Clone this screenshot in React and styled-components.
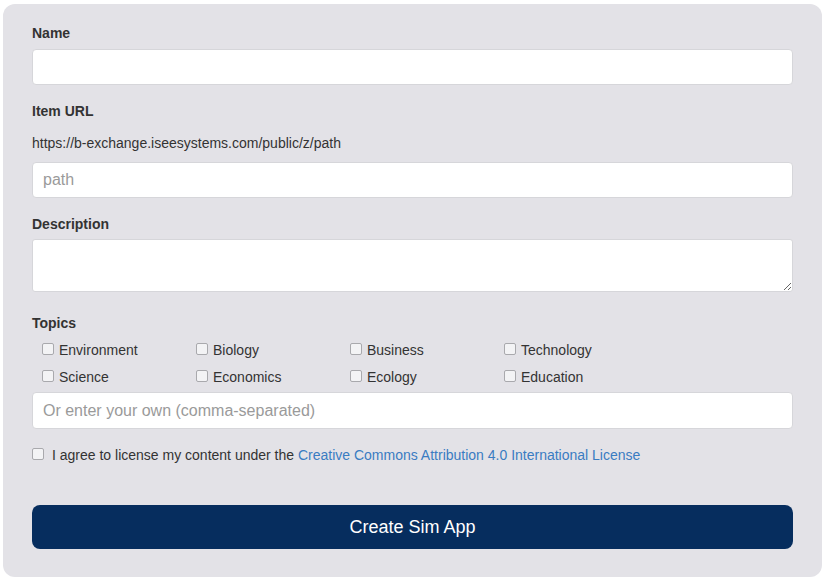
import React from 'react';
import styled, { createGlobalStyle } from 'styled-components';

const GlobalStyle = createGlobalStyle`
  html, body {
    margin: 0;
    padding: 0;
    background: #ffffff;
    font-family: "Liberation Sans", Arial, sans-serif;
    color: #333333;
  }
  * {
    box-sizing: border-box;
  }
`;

const Page = styled.div`
  padding: 4px 4px 6px 3px;
`;

const Card = styled.form`
  width: 819px;
  background: #e3e2e7;
  border-radius: 12px;
  padding: 20px 29px 28px 29px;
  display: flex;
  flex-direction: column;
`;

const Label = styled.label`
  display: block;
  font-size: 14px;
  line-height: 18px;
  font-weight: 700;
  color: #333333;
  margin-top: ${props => props.$top || 0}px;
  margin-bottom: ${props => props.$bottom || 0}px;
`;

const Field = styled.input`
  display: block;
  width: 100%;
  height: ${props => props.$height || 36}px;
  margin-top: ${props => props.$top || 0}px;
  padding: 0 10px;
  border: 1px solid #d6d6da;
  border-radius: 4px;
  background: #ffffff;
  font-family: inherit;
  font-size: 16px;
  color: #333333;
  outline: none;

  &::placeholder {
    color: #9a9a9a;
  }
`;

const TextArea = styled.textarea`
  display: block;
  width: 100%;
  height: 53px;
  padding: 6px 10px;
  border: 1px solid #d6d6da;
  border-radius: 3px;
  background: #ffffff;
  font-family: inherit;
  font-size: 16px;
  resize: vertical;
  outline: none;
`;

const UrlPrefix = styled.div`
  font-size: 14px;
  line-height: 20px;
  color: #333333;
  margin-top: 13px;
  margin-bottom: 9px;
`;

const TopicGrid = styled.div`
  display: grid;
  grid-template-columns: repeat(4, 154px);
  grid-auto-rows: 27px;
  padding-left: 10px;
  margin-top: 4px;
`;

const TopicItem = styled.label`
  display: flex;
  align-items: center;
  gap: 5px;
  font-size: 14px;
  color: #333333;
`;

const Check = styled.input.attrs({ type: 'checkbox' })`
  appearance: none;
  width: 12px;
  height: 12px;
  margin: 0 0 2px 0;
  border: 1px solid #a9a9ad;
  border-radius: 2px;
  background: #f3f3f5;
  flex-shrink: 0;
`;

const AgreeRow = styled.label`
  display: flex;
  align-items: center;
  gap: 8px;
  font-size: 14px;
  line-height: 20px;
  color: #333333;
  margin-top: 16px;
`;

const Link = styled.a`
  color: #3a7cc2;
  text-decoration: none;
`;

const SubmitButton = styled.button`
  margin-top: 40px;
  width: 100%;
  height: 44px;
  border: none;
  border-radius: 8px;
  background: #062d5e;
  color: #ffffff;
  font-family: inherit;
  font-size: 18px;
  cursor: pointer;
`;

const topics = [
  'Environment', 'Biology', 'Business', 'Technology',
  'Science', 'Economics', 'Ecology', 'Education',
];

export default function App() {
  return (
    <>
      <GlobalStyle />
      <Page>
        <Card onSubmit={e => e.preventDefault()}>
          <Label $bottom={7}>Name</Label>
          <Field type="text" />

          <Label $top={17}>Item URL</Label>
          <UrlPrefix>https://b-exchange.iseesystems.com/public/z/path</UrlPrefix>
          <Field type="text" placeholder="path" />

          <Label $top={17} $bottom={6}>Description</Label>
          <TextArea />

          <Label $top={22}>Topics</Label>
          <TopicGrid>
            {topics.map(t => (
              <TopicItem key={t}>
                <Check />
                {t}
              </TopicItem>
            ))}
          </TopicGrid>
          <Field type="text" $top={2} $height={37} placeholder="Or enter your own (comma-separated)" />

          <AgreeRow>
            <Check />
            <span>
              I agree to license my content under the{' '}
              <Link href="#">Creative Commons Attribution 4.0 International License</Link>
            </span>
          </AgreeRow>

          <SubmitButton type="submit">Create Sim App</SubmitButton>
        </Card>
      </Page>
    </>
  );
}
